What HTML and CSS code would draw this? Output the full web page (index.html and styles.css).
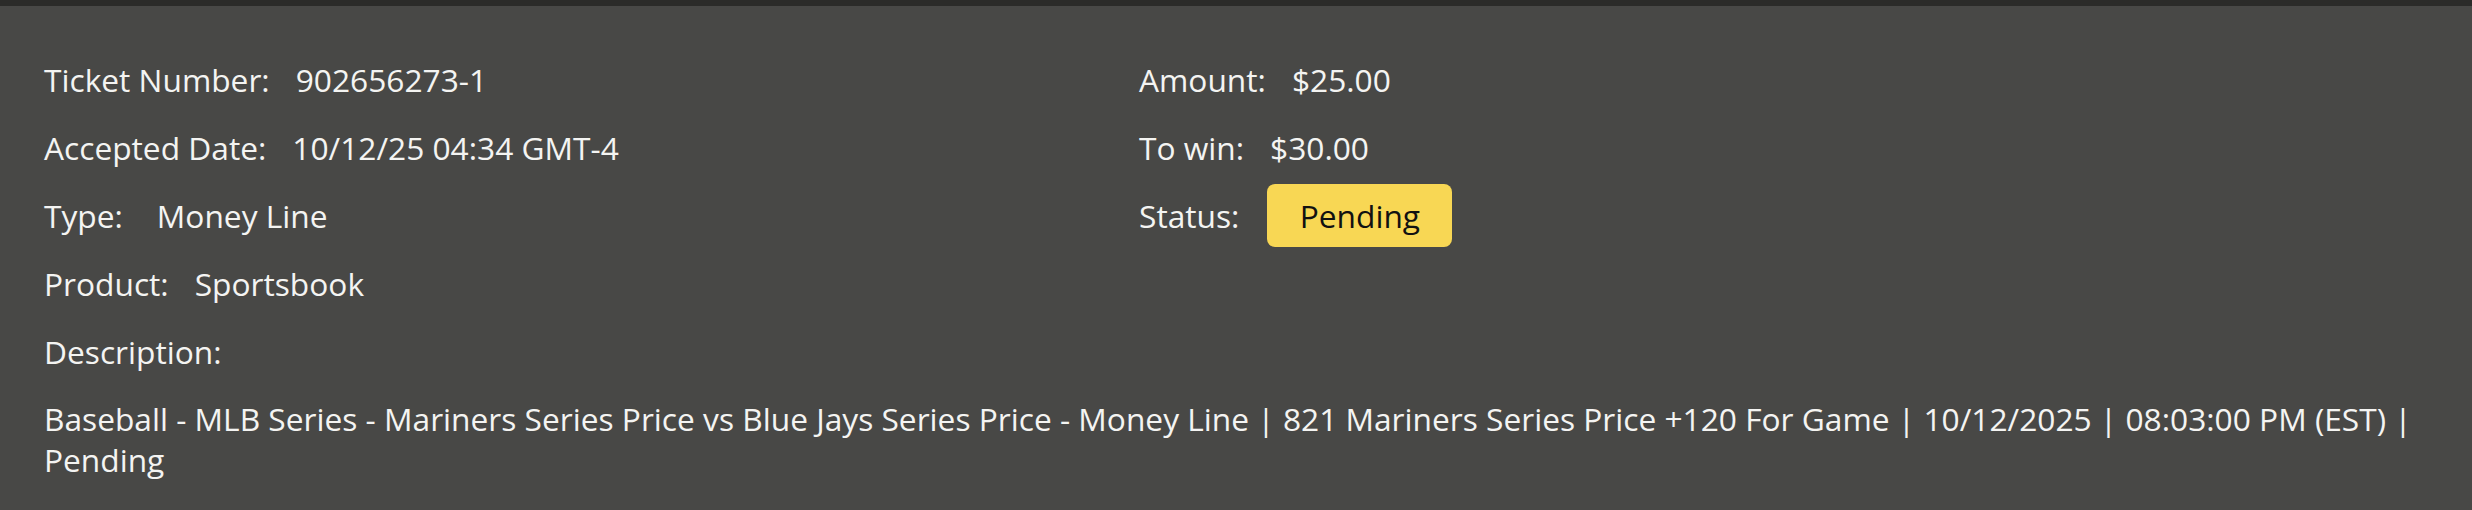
FILE: index.html
```html
<!DOCTYPE html>
<html lang="en">
<head>
<meta charset="utf-8">
<title>Ticket details</title>
<link rel="stylesheet" href="styles.css">
</head>
<body>
<div class="topbar"></div>
<section class="panel">
  <div class="grid">
    <div class="col">
      <div class="row"><span class="label">Ticket Number:</span><span class="value">902656273-1</span></div>
      <div class="row"><span class="label">Accepted Date:</span><span class="value">10/12/25 04:34 GMT-4</span></div>
      <div class="row"><span class="label">Type:</span><span class="value value-wide">Money Line</span></div>
      <div class="row"><span class="label">Product:</span><span class="value">Sportsbook</span></div>
      <div class="row"><span class="label">Description:</span></div>
    </div>
    <div class="col">
      <div class="row"><span class="label">Amount:</span><span class="value">$25.00</span></div>
      <div class="row"><span class="label">To win:</span><span class="value">$30.00</span></div>
      <div class="row"><span class="label">Status:</span><span class="badge">Pending</span></div>
    </div>
  </div>
  <p class="desc">Baseball - MLB Series - Mariners Series Price vs Blue Jays Series Price - Money Line | 821 Mariners Series Price +120 For Game | 10/12/2025 | 08:03:00 PM (EST) | Pending</p>
</section>
</body>
</html>
```
FILE: styles.css
```css
html, body {
  margin: 0;
  padding: 0;
  background: #484846;
}
body {
  font-family: "Open Sans", "Noto Sans", sans-serif;
  font-size: 31.7px;
  line-height: 41px;
  color: #f4f4f2;
}
.topbar {
  height: 6px;
  background: #2b2b29;
}
.panel {
  padding: 53px 44px 0 44px;
  background: #484846;
}
.grid {
  display: grid;
  grid-template-columns: 1095px 1fr;
}
.col {
  display: flex;
  flex-direction: column;
  gap: 27px;
}
.row {
  display: flex;
  align-items: center;
  height: 41px;
  white-space: nowrap;
}
.value {
  margin-left: 26px;
}
.value-wide {
  margin-left: 34px;
}
.badge {
  margin-left: 28px;
  background: #f8d754;
  color: #111;
  height: 63px;
  width: 185px;
  border-radius: 8px;
  display: flex;
  align-items: center;
  justify-content: center;
  flex-shrink: 0;
}
.desc {
  margin: 26px 0 0 0;
}
```
